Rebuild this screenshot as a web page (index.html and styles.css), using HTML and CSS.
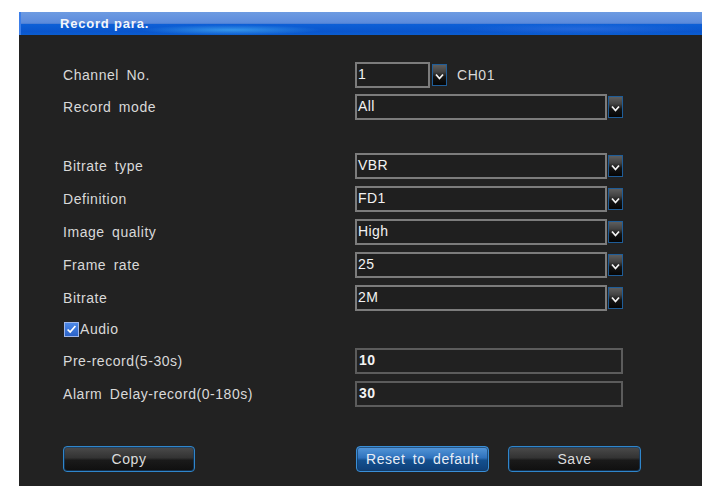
FILE: index.html
```html
<!DOCTYPE html>
<html lang="en">
<head>
<meta charset="utf-8">
<title>Record para.</title>
<link rel="stylesheet" href="styles.css">
</head>
<body>
<div class="panel">
  <div class="titlebar"><span class="title">Record para.</span></div>
  <div class="content">
    <div class="row">
      <span class="label">Channel No.</span>
      <div class="ctrl">
        <div class="combo small">
          <div class="box">1</div>
          <div class="drop"><svg viewBox="0 0 15 22" width="15" height="22"><path d="M4 10.5 L7.5 14.5 L11 10.5" fill="none" stroke="#f2f2f2" stroke-width="1.8"/></svg></div>
        </div>
        <span class="chname">CH01</span>
      </div>
    </div>
    <div class="row r-tight">
      <span class="label">Record mode</span>
      <div class="ctrl">
        <div class="combo">
          <div class="box">All</div>
          <div class="drop"><svg viewBox="0 0 15 22" width="15" height="22"><path d="M4 10.5 L7.5 14.5 L11 10.5" fill="none" stroke="#f2f2f2" stroke-width="1.8"/></svg></div>
        </div>
      </div>
    </div>
    <div class="row r-group">
      <span class="label">Bitrate type</span>
      <div class="ctrl">
        <div class="combo">
          <div class="box">VBR</div>
          <div class="drop"><svg viewBox="0 0 15 22" width="15" height="22"><path d="M4 10.5 L7.5 14.5 L11 10.5" fill="none" stroke="#f2f2f2" stroke-width="1.8"/></svg></div>
        </div>
      </div>
    </div>
    <div class="row">
      <span class="label">Definition</span>
      <div class="ctrl">
        <div class="combo">
          <div class="box">FD1</div>
          <div class="drop"><svg viewBox="0 0 15 22" width="15" height="22"><path d="M4 10.5 L7.5 14.5 L11 10.5" fill="none" stroke="#f2f2f2" stroke-width="1.8"/></svg></div>
        </div>
      </div>
    </div>
    <div class="row">
      <span class="label">Image quality</span>
      <div class="ctrl">
        <div class="combo">
          <div class="box">High</div>
          <div class="drop"><svg viewBox="0 0 15 22" width="15" height="22"><path d="M4 10.5 L7.5 14.5 L11 10.5" fill="none" stroke="#f2f2f2" stroke-width="1.8"/></svg></div>
        </div>
      </div>
    </div>
    <div class="row">
      <span class="label">Frame rate</span>
      <div class="ctrl">
        <div class="combo">
          <div class="box">25</div>
          <div class="drop"><svg viewBox="0 0 15 22" width="15" height="22"><path d="M4 10.5 L7.5 14.5 L11 10.5" fill="none" stroke="#f2f2f2" stroke-width="1.8"/></svg></div>
        </div>
      </div>
    </div>
    <div class="row">
      <span class="label">Bitrate</span>
      <div class="ctrl">
        <div class="combo">
          <div class="box">2M</div>
          <div class="drop"><svg viewBox="0 0 15 22" width="15" height="22"><path d="M4 10.5 L7.5 14.5 L11 10.5" fill="none" stroke="#f2f2f2" stroke-width="1.8"/></svg></div>
        </div>
      </div>
    </div>
    <div class="row r-check">
      <label class="check">
        <span class="tick"><svg viewBox="0 0 15 15" width="13" height="13"><path d="M3 7.5 L6 10.5 L12 3.5" fill="none" stroke="#fff" stroke-width="2"/></svg></span>
        <span class="checklabel">Audio</span>
      </label>
    </div>
    <div class="row r-input">
      <span class="label">Pre-record(5-30s)</span>
      <div class="ctrl"><div class="field">10</div></div>
    </div>
    <div class="row">
      <span class="label">Alarm Delay-record(0-180s)</span>
      <div class="ctrl"><div class="field">30</div></div>
    </div>
    <div class="row r-buttons">
      <div class="leftcol"><button class="btn">Copy</button></div>
      <div class="ctrl btns">
        <button class="btn btn-focus">Reset to default</button>
        <button class="btn">Save</button>
      </div>
    </div>
  </div>
</div>
</body>
</html>
```

FILE: styles.css
```css
html, body {
  margin: 0;
  padding: 0;
  background: #ffffff;
}

body {
  font-family: "Liberation Sans", Arial, sans-serif;
  overflow: hidden;
}

.panel {
  margin: 12px 0 0 19px;
  width: 683px;
  height: 474px;
  background: #222222;
}

/* blue header strip with a lighter upper half */
.titlebar {
  height: 23px;
  display: flex;
  align-items: center;
  padding-left: 39px;
  background:
    radial-gradient(ellipse 90px 5px at 210px 18px, rgba(90, 200, 255, 0.55), rgba(90, 200, 255, 0) 100%),
    radial-gradient(ellipse 120px 5px at 560px 17px, rgba(60, 120, 230, 0.5), rgba(60, 120, 230, 0) 100%),
    linear-gradient(to bottom, #6d9be2 0%, #5d8cdc 45%, #4d80d6 50%, #0d5fd6 54%, #0a56cd 85%, #0b5dd0 100%);
  border-left: 2px solid #3c7ee8;
  box-sizing: border-box;
}

.title {
  color: #f4f6fb;
  font-size: 13px;
  font-weight: bold;
  letter-spacing: 0.8px;
  margin-top: -1px;
}

.content {
  padding: 27px 0 0 44px;
  display: flex;
  flex-direction: column;
}

.row {
  display: grid;
  grid-template-columns: 292px 1fr;
  align-items: center;
  height: 26px;
  margin-top: 7px;
}

.row:first-child { margin-top: 0; }
.row.r-tight { margin-top: 6px; }
.row.r-group { margin-top: 33px; }
.row.r-check { height: 22px; }
.row.r-input { margin-top: 8px; }
.row.r-buttons { margin-top: 39px; }

.label, .checklabel, .chname {
  color: #d9d9d9;
  font-size: 14px;
  letter-spacing: 0.55px;
  word-spacing: 3px;
  white-space: nowrap;
}

.ctrl {
  display: flex;
  align-items: center;
}

.combo {
  display: flex;
  align-items: center;
  gap: 1px;
}

.box, .field {
  box-sizing: border-box;
  height: 26px;
  border: 2px solid #7c7c7c;
  background: #1f1f1f;
  color: #f2f2f2;
  font-size: 14px;
  letter-spacing: 0.4px;
  line-height: 20px;
  padding-left: 1px;
}

.combo .box { width: 252px; }
.combo.small .box { width: 75px; }
.combo.small { gap: 2px; }

.drop {
  box-sizing: border-box;
  width: 15px;
  height: 22px;
  border: 1px solid #1f5d98;
  background: linear-gradient(to bottom, #5e5e5e 0%, #424242 35%, #141414 60%, #050505 100%);
  display: flex;
}

.drop svg { display: block; margin: -1px; }

.chname { margin-left: 10px; }

.field {
  width: 268px;
  border-color: #5c5c5c;
  font-weight: bold;
  padding-left: 2px;
  background: #212121;
}

.check {
  grid-column: 1 / 3;
  display: flex;
  align-items: center;
  margin-left: 1px;
}

.tick {
  box-sizing: border-box;
  width: 15px;
  height: 15px;
  border: 1px solid #9fb6e8;
  background: linear-gradient(to bottom, #4d88e6, #2a62c8);
  display: flex;
  align-items: center;
  justify-content: center;
}

.checklabel { margin-left: 1px; }

.btns { gap: 19px; padding-left: 1px; }

.btn {
  box-sizing: border-box;
  width: 132px;
  height: 26px;
  border: 1px solid #2f86cc;
  border-radius: 4px;
  box-shadow: inset 0 0 0 1px rgba(20, 60, 100, 0.7);
  background: linear-gradient(to bottom, #4b4b4b 0%, #333 45%, #1a1a1a 55%, #0f0f0f 100%);
  color: #dcdcdc;
  font-family: "Liberation Sans", Arial, sans-serif;
  font-size: 14px;
  letter-spacing: 0.55px;
  word-spacing: 3px;
  padding: 0;
}

.btns .btn { width: 133px; }

.btn-focus {
  border-color: #3a8fd8;
  background: linear-gradient(to bottom, #5597d9 0%, #2f72bd 45%, #14508f 55%, #0e3f78 100%);
  color: #e8eef6;
}
```
